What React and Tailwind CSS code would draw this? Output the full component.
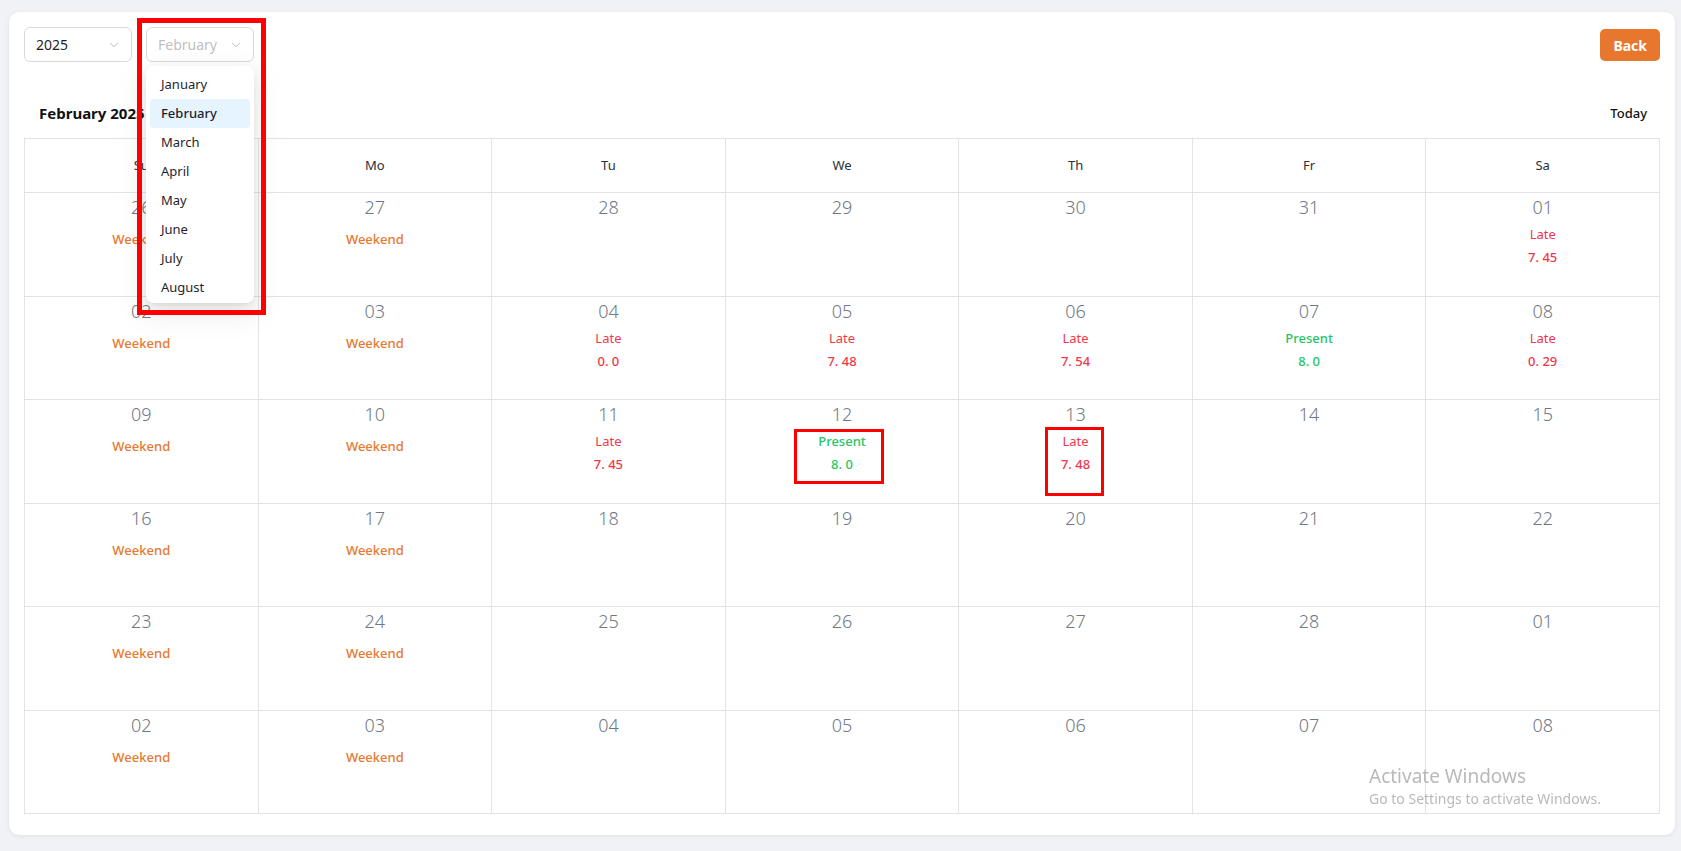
import React from 'react';
import { ChevronDown } from 'lucide-react';

const months = ['January', 'February', 'March', 'April', 'May', 'June', 'July', 'August'];
const days = ['Su', 'Mo', 'Tu', 'We', 'Th', 'Fr', 'Sa'];

// status: W = weekend, L = late, P = present
const weeks = [
  [['26', 'W'], ['27', 'W'], ['28'], ['29'], ['30'], ['31'], ['01', 'L', '7. 45']],
  [['02', 'W'], ['03', 'W'], ['04', 'L', '0. 0'], ['05', 'L', '7. 48'], ['06', 'L', '7. 54'], ['07', 'P', '8. 0'], ['08', 'L', '0. 29']],
  [['09', 'W'], ['10', 'W'], ['11', 'L', '7. 45'], ['12', 'P', '8. 0', 'a'], ['13', 'L', '7. 48', 'b'], ['14'], ['15']],
  [['16', 'W'], ['17', 'W'], ['18'], ['19'], ['20'], ['21'], ['22']],
  [['23', 'W'], ['24', 'W'], ['25'], ['26'], ['27'], ['28'], ['01']],
  [['02', 'W'], ['03', 'W'], ['04'], ['05'], ['06'], ['07'], ['08']],
];

function Cell({ day, status, value, mark }) {
  return (
    <div className="relative h-[103.5px] border-r border-b border-[#e3e3e3] flex flex-col items-center">
      <div className="mt-[2px] text-[18px] leading-6 font-light text-[#6f7885]">{day}</div>
      {status === 'W' && (
        <div className="mt-[10px] text-[13px] leading-5 font-medium text-[#e8792f]">Weekend</div>
      )}
      {status === 'L' && (
        <>
          <div className="mt-[5px] text-[13px] leading-5 text-[#f0384a]">Late</div>
          <div className="mt-[3px] text-[13px] leading-5 font-medium text-[#f0384a]">{value}</div>
        </>
      )}
      {status === 'P' && (
        <>
          <div className="mt-[5px] text-[13px] leading-5 font-medium text-[#25c565]">Present</div>
          <div className="mt-[3px] text-[13px] leading-5 font-medium text-[#25c565]">{value}</div>
        </>
      )}
      {mark === 'a' && (
        <div className="absolute left-[68px] top-[29px] w-[90px] h-[55px] border-[3px] border-[#ff0000]" />
      )}
      {mark === 'b' && (
        <div className="absolute left-[86px] top-[27px] w-[59px] h-[69px] border-[3px] border-[#ff0000]" />
      )}
    </div>
  );
}

export default function App() {
  return (
    <div
      className="min-h-[851px] bg-[#f0f2f5] pl-[9px] pr-[6px] pt-[12px]"
      style={{ fontFamily: '"Noto Sans", "Open Sans", sans-serif' }}
    >
      <div className="relative h-[823px] bg-white rounded-[10px] shadow-[0_1px_4px_rgba(0,0,0,0.08)] p-[15px]">
        <div className="flex items-start justify-between">
          <div className="flex gap-[14px]">
            <div className="w-[108px] h-[35px] border border-[#d9d9d9] rounded-[6px] flex items-center justify-between pl-[11px] pr-[10px] text-[14px] text-[#1f1f1f]">
              <span>2025</span>
              <ChevronDown size={14} strokeWidth={1.5} className="text-[#b0b0b0]" />
            </div>
            <div className="relative">
              <div className="w-[108px] h-[35px] border border-[#d9d9d9] rounded-[6px] flex items-center justify-between pl-[11px] pr-[10px] text-[14px] text-[#bfbfbf]">
                <span>February</span>
                <ChevronDown size={14} strokeWidth={1.5} className="text-[#b0b0b0]" />
              </div>
              <div className="absolute z-20 left-0 top-[39px] w-[108px] bg-white rounded-[8px] shadow-[0_6px_16px_rgba(0,0,0,0.08),0_3px_6px_-4px_rgba(0,0,0,0.12),0_9px_28px_8px_rgba(0,0,0,0.05)] pt-1 pb-px px-1">
                {months.map((m) => (
                  <div
                    key={m}
                    className={
                      m === 'February'
                        ? 'h-[29px] flex items-center pl-[11px] rounded-[4px] bg-[#e6f4ff] text-[13px] text-[#1f1f2e] font-medium'
                        : 'h-[29px] flex items-center pl-[11px] rounded-[4px] text-[13px] text-[#1f1f2e]'
                    }
                  >
                    {m}
                  </div>
                ))}
              </div>
              <div className="absolute z-30 left-[-9px] top-[-9px] w-[129px] h-[297px] border-[5px] border-[#ff0000] pointer-events-none" />
            </div>
          </div>
          <button className="mt-[2px] h-[32px] px-[13px] rounded-[5px] bg-[#e8772e] text-white text-[14px] font-bold">
            Back
          </button>
        </div>

        <div className="mt-[28px] h-[47px] flex items-center justify-between pl-[15px] pr-[13px]">
          <div className="text-[15px] font-bold text-[#111]">February 2025</div>
          <div className="text-[13px] font-medium text-[#111]">Today</div>
        </div>

        <div className="mt-px border-l border-t border-[#e3e3e3]">
          <div className="grid grid-cols-7">
            {days.map((d) => (
              <div key={d} className="h-[54px] border-r border-b border-[#e3e3e3] flex items-center justify-center text-[13px] text-[#2a2f3a]">
                {d}
              </div>
            ))}
          </div>
          {weeks.map((w, i) => (
            <div key={i} className="grid grid-cols-7">
              {w.map((c, j) => (
                <Cell key={j} day={c[0]} status={c[1]} value={c[2]} mark={c[3]} />
              ))}
            </div>
          ))}
        </div>
      </div>

      <div className="fixed left-[1369px] top-[764px] pointer-events-none text-[#b9b9b9]" style={{ fontFamily: '"Noto Sans", sans-serif' }}>
        <div className="text-[19px] leading-6">Activate Windows</div>
        <div className="text-[14px] leading-5 mt-[1px]">Go to Settings to activate Windows.</div>
      </div>
    </div>
  );
}
